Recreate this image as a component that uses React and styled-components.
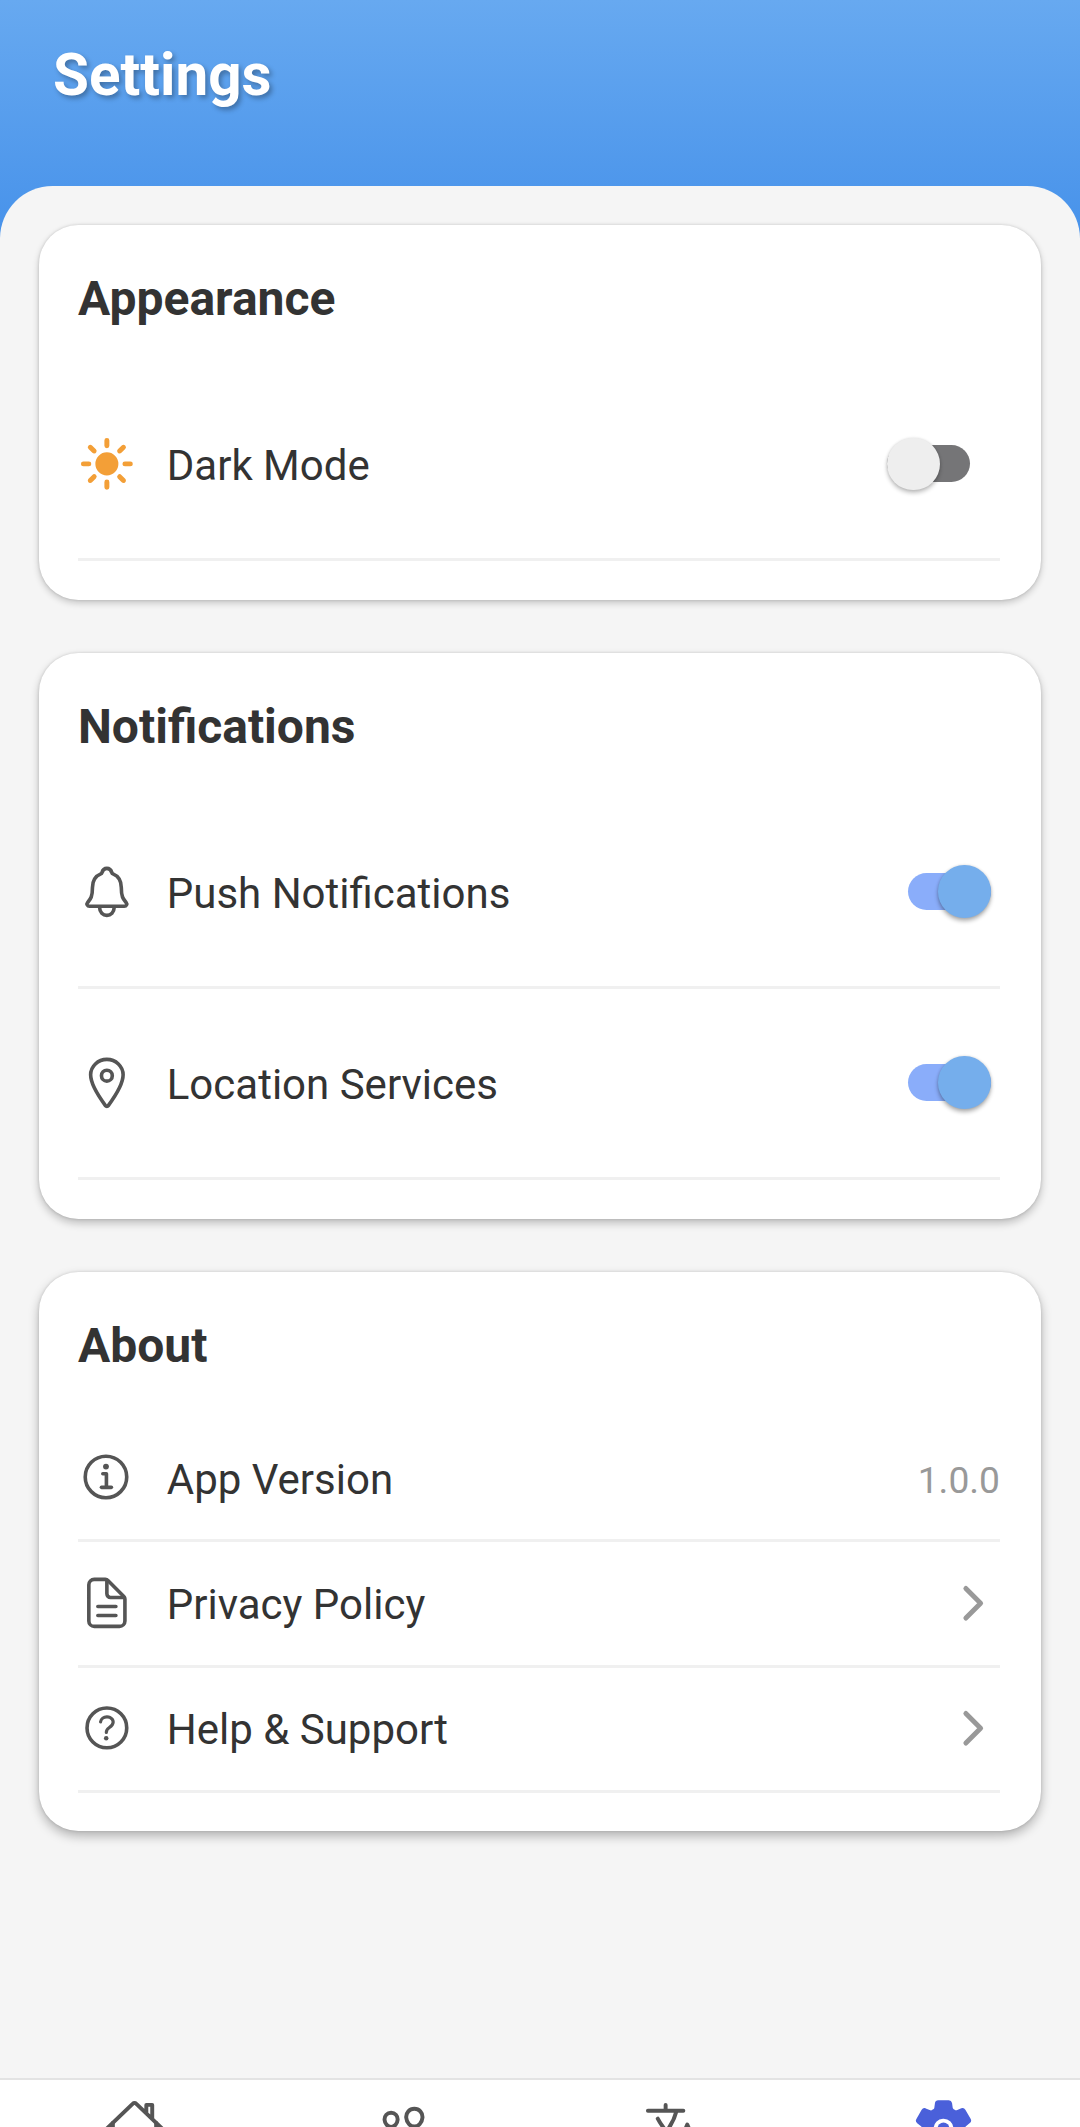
import React, { useState } from "react";
import styled, { createGlobalStyle } from "styled-components";
import {
  IoSunny,
  IoNotificationsOutline,
  IoLocationOutline,
  IoInformationCircleOutline,
  IoDocumentTextOutline,
  IoHelpCircleOutline,
  IoChevronForward,
  IoHomeOutline,
  IoPeopleOutline,
  IoLanguageOutline,
  IoSettings,
} from "react-icons/io5";

const GlobalStyle = createGlobalStyle`
  * { box-sizing: border-box; }
  body {
    margin: 0;
    overflow: hidden;
    font-family: Roboto, "Liberation Sans", sans-serif;
  }
`;

const Screen = styled.div`
  display: flex;
  flex-direction: column;
  width: 1080px;
  height: 2127px;
  overflow: hidden;
  background: #f5f5f5;
`;

const Header = styled.header`
  flex: none;
  height: 238px;
  padding: 41px 53px 0;
  background: linear-gradient(180deg, #67a9f0 0%, #4792ea 100%);
`;

const HeaderTitle = styled.h1`
  margin: 0;
  font-size: 58.4px;
  line-height: 68px;
  font-weight: 700;
  color: #fff;
  text-shadow: 2.6px 2.6px 5px rgba(0, 0, 0, 0.3);
`;

const Content = styled.main`
  flex: 1;
  min-height: 0;
  display: flex;
  flex-direction: column;
  gap: 53px;
  margin-top: -52px;
  padding: 39px 39px 0;
  border-radius: 52.5px 52.5px 0 0;
  background: #f5f5f5;
`;

const Card = styled.section`
  flex: none;
  padding: 40.4px 41px 38.4px 39px;
  border-radius: 39.4px;
  background: #fff;
  box-shadow:
    0 0 3px rgba(0, 0, 0, 0.14),
    0 ${(p) => p.$drop}px ${(p) => p.$drop * 2 + 1}px rgba(0, 0, 0, ${(p) => p.$depth});
`;

const CardTitle = styled.h2`
  margin: 0;
  height: 105px;
  padding-top: 6px;
  font-size: 48px;
  line-height: 55px;
  font-weight: 700;
  color: #333;
`;

const Row = styled.div`
  display: flex;
  align-items: center;
  height: ${(p) => (p.$tall ? 191 : 125.3)}px;
  border-bottom: 3px solid #f0f0f0;
`;

const RowIcon = styled.span`
  display: flex;
  margin: 0 31px 1px 0;
  font-size: 57.75px;
  color: ${(p) => p.$color || "#555"};
`;

const RowLabel = styled.span`
  flex: 1;
  padding-top: 3.4px;
  font-size: 42px;
  line-height: 50px;
  color: #333;
`;

const RowValue = styled.span`
  padding-top: 3px;
  font-size: 37.2px;
  line-height: 44px;
  color: #999;
`;

const Chevron = styled(IoChevronForward)`
  margin: 0 1px 1px 0;
  font-size: 52.5px;
  color: #999;
`;

const Track = styled.button`
  display: flex;
  align-items: center;
  justify-content: ${(p) => (p.$on ? "flex-end" : "flex-start")};
  width: 82.7px;
  height: 37px;
  margin: 0 ${(p) => (p.$on ? 9.2 : 30.2)}px 1px 0;
  padding: 0;
  border: 0;
  border-radius: 19px;
  background: ${(p) => (p.$on ? "#8aadfa" : "#757577")};
`;

const Thumb = styled.span`
  flex: none;
  width: 52.5px;
  height: 52.5px;
  border-radius: 50%;
  background: ${(p) => (p.$on ? "#75aeec" : "#eee")};
  box-shadow:
    0 0 3px rgba(0, 0, 0, 0.12),
    0 3px 4px rgba(0, 0, 0, ${(p) => (p.$on ? 0.3 : 0.24)});
`;

const TabBar = styled.nav`
  flex: none;
  display: flex;
  height: 49px;
  padding-right: 2px;
  border-top: 2px solid #e3e3e3;
  background: #fff;
`;

const Tab = styled.a`
  flex: 1;
  display: flex;
  justify-content: center;
  padding-top: 17px;
  font-size: 63px;
  color: ${(p) => (p.$active ? "#4a60da" : "#555")};
`;

function Toggle({ initial, label }) {
  const [on, setOn] = useState(initial);
  return (
    <Track role="switch" aria-checked={on} aria-label={label} $on={on} onClick={() => setOn(!on)}>
      <Thumb $on={on} />
    </Track>
  );
}

function SettingRow({ icon: Icon, color, label, tall, children }) {
  return (
    <Row $tall={tall}>
      <RowIcon $color={color}>
        <Icon />
      </RowIcon>
      <RowLabel>{label}</RowLabel>
      {children}
    </Row>
  );
}

const tabs = [
  { icon: IoHomeOutline },
  { icon: IoPeopleOutline },
  { icon: IoLanguageOutline },
  { icon: IoSettings, active: true },
];

export default function App() {
  return (
    <Screen>
      <GlobalStyle />
      <Header>
        <HeaderTitle>Settings</HeaderTitle>
      </Header>
      <Content>
        <Card $drop={3} $depth={0.2}>
          <CardTitle>Appearance</CardTitle>
          <SettingRow tall icon={IoSunny} color="#f39f37" label="Dark Mode">
            <Toggle initial={false} label="Dark Mode" />
          </SettingRow>
        </Card>
        <Card $drop={4} $depth={0.24}>
          <CardTitle>Notifications</CardTitle>
          <SettingRow tall icon={IoNotificationsOutline} label="Push Notifications">
            <Toggle initial label="Push Notifications" />
          </SettingRow>
          <SettingRow tall icon={IoLocationOutline} label="Location Services">
            <Toggle initial label="Location Services" />
          </SettingRow>
        </Card>
        <Card $drop={5} $depth={0.28}>
          <CardTitle>About</CardTitle>
          <SettingRow icon={IoInformationCircleOutline} label="App Version">
            <RowValue>1.0.0</RowValue>
          </SettingRow>
          <SettingRow icon={IoDocumentTextOutline} label="Privacy Policy">
            <Chevron />
          </SettingRow>
          <SettingRow icon={IoHelpCircleOutline} label="Help & Support">
            <Chevron />
          </SettingRow>
        </Card>
      </Content>
      <TabBar>
        {tabs.map(({ icon: Icon, active }, i) => (
          <Tab key={i} $active={active}>
            <Icon />
          </Tab>
        ))}
      </TabBar>
    </Screen>
  );
}
